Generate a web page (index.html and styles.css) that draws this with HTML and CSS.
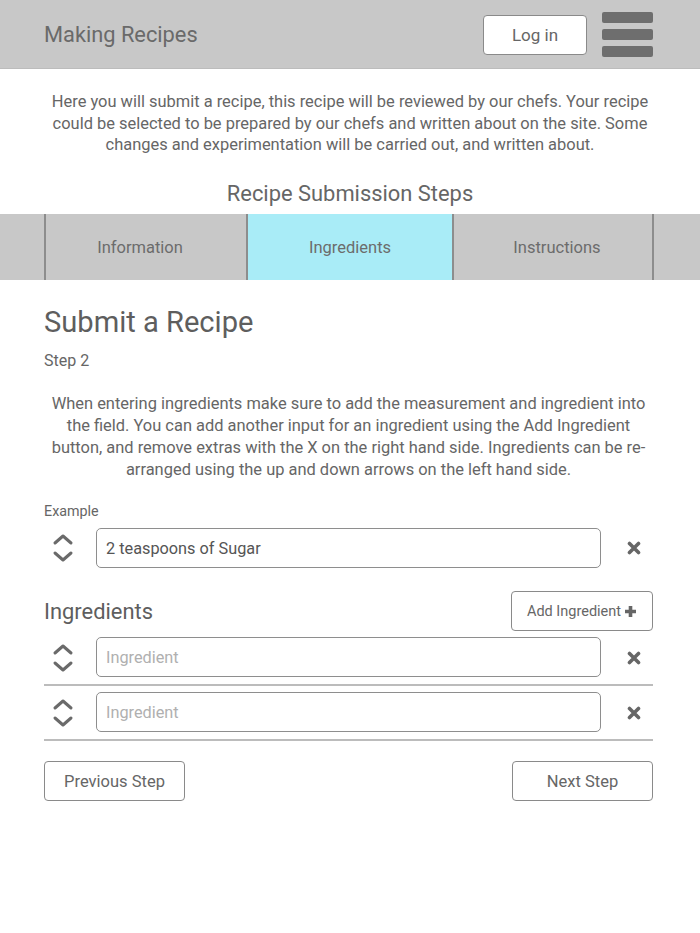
FILE: index.html
```html
<!DOCTYPE html>
<html>
<head>
<meta charset="utf-8">
<link rel="stylesheet" href="styles.css">
</head>
<body>
<header class="topbar">
  <div class="brand">Making Recipes</div>
  <div class="top-actions">
    <button class="btn login">Log in</button>
    <div class="burger"><span></span><span></span><span></span></div>
  </div>
</header>

<p class="intro">Here you will submit a recipe, this recipe will be reviewed by our chefs. Your recipe could be selected to be prepared by our chefs and written about on the site. Some changes and experimentation will be carried out, and written about.</p>

<h2 class="steps-title">Recipe Submission Steps</h2>
<nav class="tabs">
  <div class="tabs-inner">
    <div class="tab first">Information</div>
    <div class="tab active">Ingredients</div>
    <div class="tab last">Instructions</div>
  </div>
</nav>

<main class="content">
  <h1 class="title">Submit a Recipe</h1>
  <div class="step">Step 2</div>
  <p class="help">When entering ingredients make sure to add the measurement and ingredient into the field. You can add another input for an ingredient using the Add Ingredient button, and remove extras with the X on the right hand side. Ingredients can be re-arranged using the up and down arrows on the left hand side.</p>

  <div class="example-label">Example</div>
  <div class="row">
    <div class="arrows"><svg width="22" height="32" viewBox="0 0 22 32"><path d="M3 11 L11 4 L19 11 M3 21 L11 28 L19 21" fill="none" stroke="#6a6a6a" stroke-width="3" stroke-linecap="round" stroke-linejoin="round"/></svg></div>
    <div class="field filled">2 teaspoons of Sugar</div>
    <div class="remove"><svg width="14" height="14" viewBox="0 0 14 14"><path d="M2.5 2.5 L11.5 11.5 M11.5 2.5 L2.5 11.5" stroke="#666" stroke-width="3.6" stroke-linecap="round"/></svg></div>
  </div>

  <div class="ing-head">
    <h3 class="ing-title">Ingredients</h3>
    <button class="btn add">Add Ingredient <svg width="13" height="13" viewBox="0 0 13 13"><path d="M6.5 1 V12 M1 6.5 H12" stroke="#666" stroke-width="3.6"/></svg></button>
  </div>

  <div class="row line">
    <div class="arrows"><svg width="22" height="32" viewBox="0 0 22 32"><path d="M3 11 L11 4 L19 11 M3 21 L11 28 L19 21" fill="none" stroke="#6a6a6a" stroke-width="3" stroke-linecap="round" stroke-linejoin="round"/></svg></div>
    <div class="field">Ingredient</div>
    <div class="remove"><svg width="14" height="14" viewBox="0 0 14 14"><path d="M2.5 2.5 L11.5 11.5 M11.5 2.5 L2.5 11.5" stroke="#666" stroke-width="3.6" stroke-linecap="round"/></svg></div>
  </div>
  <div class="row line">
    <div class="arrows"><svg width="22" height="32" viewBox="0 0 22 32"><path d="M3 11 L11 4 L19 11 M3 21 L11 28 L19 21" fill="none" stroke="#6a6a6a" stroke-width="3" stroke-linecap="round" stroke-linejoin="round"/></svg></div>
    <div class="field">Ingredient</div>
    <div class="remove"><svg width="14" height="14" viewBox="0 0 14 14"><path d="M2.5 2.5 L11.5 11.5 M11.5 2.5 L2.5 11.5" stroke="#666" stroke-width="3.6" stroke-linecap="round"/></svg></div>
  </div>

  <div class="nav-buttons">
    <button class="btn nav">Previous Step</button>
    <button class="btn nav">Next Step</button>
  </div>
</main>
</body>
</html>
```

FILE: styles.css
```css
* { box-sizing: border-box; }
body {
  margin: 0;
  font-family: Roboto, "Liberation Sans", sans-serif;
  color: #666;
  background: #fff;
}
.topbar {
  height: 69px;
  background: #c8c8c8;
  border-bottom: 1px solid #bcbcbc;
  display: flex;
  align-items: center;
  justify-content: space-between;
  padding: 0 47px 0 44px;
}
.brand { font-size: 21.8px; color: #6a6a6a; }
.top-actions { display: flex; align-items: center; gap: 15px; }
.btn {
  font-family: inherit;
  background: #fff;
  border: 1px solid #8a8a8a;
  border-radius: 4px;
  color: #666;
  cursor: pointer;
}
.login { width: 104px; height: 40px; font-size: 17px; margin-top: 1px; }
.burger { display: flex; flex-direction: column; gap: 6px; width: 51px; }
.burger span { display: block; height: 11px; background: #6e6e6e; border-radius: 2px; }
.intro {
  margin: 22px 44px 0;
  text-align: center;
  font-size: 16.45px;
  line-height: 21.7px;
}
.steps-title {
  margin: 22px 0 0;
  text-align: center;
  font-weight: 400;
  font-size: 21.9px;
  line-height: 32px;
}
.tabs { margin-top: 4px; background: #c8c8c8; height: 66px; }
.tabs-inner {
  margin: 0 46px 0 44px;
  height: 100%;
  display: grid;
  grid-template-columns: 200px 206px 1fr;
  border-left: 2px solid #8d8d8d;
  border-right: 2px solid #8d8d8d;
}
.tab {
  display: flex; align-items: center; justify-content: center;
  font-size: 16.5px;
  color: #6c6c6c;
}
.tab.first { padding-right: 12px; }
.tab.last { padding-left: 8px; }
.tab + .tab { border-left: 2px solid #8d8d8d; }
.tab.active { background: #a9ecf7; }
.content { padding: 0 47px 0 44px; }
.title {
  margin: 22px 0 0;
  font-weight: 400;
  font-size: 29.1px;
  line-height: 40px;
  color: #5e5e5e;
}
.step { margin-top: 9px; font-size: 16px; line-height: 20px; }
.help {
  margin: 22px 0 0;
  text-align: center;
  font-size: 16.45px;
  line-height: 21.8px;
}
.example-label { margin-top: 22px; margin-bottom: 4px; font-size: 14.3px; line-height: 18px; }
.row {
  display: flex; align-items: center;
  height: 48px;
}
.arrows { width: 52px; display: flex; justify-content: flex-start; padding-left: 8px; }
.arrows svg { display: block; }
.field {
  width: 505px; height: 40px;
  border: 1px solid #8e8e8e;
  border-radius: 5px;
  display: flex; align-items: center;
  padding-left: 9px;
  font-size: 16.3px;
  color: #b0b0b0;
}
.field.filled { color: #555; }
.remove { flex: 1; display: flex; justify-content: center; padding-left: 14px; }
.remove svg { display: block; }
.ing-head {
  margin-top: 19px;
  display: flex; justify-content: space-between; align-items: center;
  height: 40px;
}
.ing-title { margin: 0; font-weight: 400; font-size: 21.9px; color: #5e5e5e; }
.add {
  width: 142px; height: 40px; font-size: 14.5px;
  display: flex; align-items: center; justify-content: center; gap: 3px;
  padding: 0;
}
.row.line {
  height: 55px;
  border-bottom: 2px solid #bcbcbc;
  align-items: flex-start;
  padding-top: 6px;
}
.row.line .arrows, .row.line .remove { align-self: center; margin-top: -5px; }
.nav-buttons {
  margin-top: 20px;
  display: flex; justify-content: space-between;
}
.nav { width: 141px; height: 40px; font-size: 16.5px; }
```
